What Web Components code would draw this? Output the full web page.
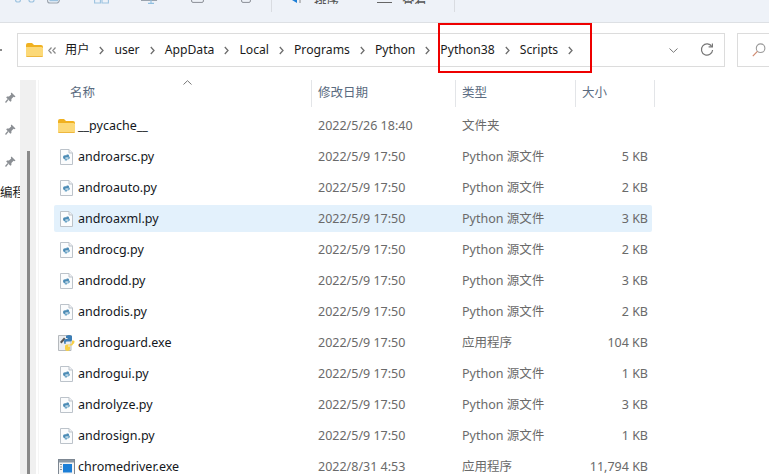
<!DOCTYPE html>
<html lang="zh">
    <head>
        <meta charset="utf-8"/>
        <title>Scripts</title>
        <style>
            html, body { margin: 0; background: #fff; }
        </style>
    </head>
    <body>
        <explorer-window>
            <tool-bar slot="toolbar"></tool-bar>
            <address-bar slot="address" path="用户 user AppData Local Programs Python Python38 Scripts"></address-bar>
            <nav-pane slot="nav"></nav-pane>
            <file-list slot="list">
                <file-row kind="folder" date="2022/5/26 18:40" type="文件夹">__pycache__</file-row>
                <file-row kind="py" date="2022/5/9 17:50" type="Python 源文件" size="5 KB">androarsc.py</file-row>
                <file-row kind="py" date="2022/5/9 17:50" type="Python 源文件" size="2 KB">androauto.py</file-row>
                <file-row kind="py" date="2022/5/9 17:50" type="Python 源文件" size="3 KB" selected>androaxml.py</file-row>
                <file-row kind="py" date="2022/5/9 17:50" type="Python 源文件" size="2 KB">androcg.py</file-row>
                <file-row kind="py" date="2022/5/9 17:50" type="Python 源文件" size="3 KB">androdd.py</file-row>
                <file-row kind="py" date="2022/5/9 17:50" type="Python 源文件" size="2 KB">androdis.py</file-row>
                <file-row kind="pyexe" date="2022/5/9 17:50" type="应用程序" size="104 KB">androguard.exe</file-row>
                <file-row kind="py" date="2022/5/9 17:50" type="Python 源文件" size="1 KB">androgui.py</file-row>
                <file-row kind="py" date="2022/5/9 17:50" type="Python 源文件" size="3 KB">androlyze.py</file-row>
                <file-row kind="py" date="2022/5/9 17:50" type="Python 源文件" size="1 KB">androsign.py</file-row>
                <file-row kind="exe" date="2022/8/31 4:53" type="应用程序" size="11,794 KB">chromedriver.exe</file-row>
            </file-list>
        </explorer-window>

        <script>
            const FONT = `"Noto Sans", "Noto Sans CJK SC", sans-serif`;

            const FOLDER_ICON = `
                <svg width="17" height="14" viewBox="0 0 17 14">
                    <path d="M0 2 Q0 0 2 0 H6 L8 2 H15 Q17 2 17 4 V5 H0 Z" fill="#f0b120"/>
                    <path d="M0 4 H15.5 Q17 4 17 5.5 V12.5 Q17 14 15.5 14 H1.5 Q0 14 0 12.5 Z" fill="#fcd978"/>
                    <path d="M0 13 H17 V12.5 Q17 14 15.5 14 H1.5 Q0 14 0 12.5 Z" fill="#eeb73d"/>
                </svg>`;

            const ICONS = {
                folder: FOLDER_ICON,
                py: `
                    <svg width="17" height="18" viewBox="0 0 17 18">
                        <path d="M2.5 1.5 H11 L14.5 5 V16.5 H2.5 Z" fill="#fbfcfd" stroke="#bcc3ca"/>
                        <path d="M11 1.5 V5 H14.5" fill="#eef1f4" stroke="#bcc3ca"/>
                        <path d="M5 9 Q5 7.2 7 7.2 H8.6 V6.4 H9.8 Q11 6.4 11 7.6 V9.6 H7.4 V11 H6.2 Q5 11 5 9 Z" fill="#4b8bb5"/>
                        <path d="M12 9.6 Q12 11.4 10.2 11.4 H9 V12.6 H7.6 Q6.6 12.6 6.6 11.4 V10.4 H10.2 V8.4 H11 Q12 8.4 12 9.6 Z" fill="#6fa6c8"/>
                    </svg>`,
                pyexe: `
                    <svg width="18" height="18" viewBox="0 0 18 18">
                        <path d="M0.5 1.5 H13 V16.5 H0.5 Z" fill="#eceef0" stroke="#b5b9bd"/>
                        <path d="M2 8 L6 3.5 L7.5 5 L3.5 9.5 Z" fill="#555"/>
                        <path d="M6 7 Q6 5 8 5 H9.5 V4 H8 V2.5 Q8 1 11 1 Q14 1 14 2.5 V6 Q14 7.6 12 7.6 H9 Q7.6 7.6 7.6 9 V10 H6.6 Q6 10 6 7 Z" fill="#3b7db5"/>
                        <path d="M16.5 7 Q16.5 10 15 10 V10 Q15 11.5 13 11.5 H10 V12.6 H12 V14.5 Q12 17 9.5 17 Q7 17 7 14.5 V12 Q7 10.4 9 10.4 H12 Q14 10.4 14 8.6 V6.6 H15.5 Q16.5 6.6 16.5 7 Z" fill="#f6cf45"/>
                    </svg>`,
                exe: `
                    <svg width="17" height="16" viewBox="0 0 17 16">
                        <rect x="0.5" y="0.5" width="16" height="15" fill="#f3f4f5" stroke="#7d8792"/>
                        <rect x="1" y="1" width="15" height="2.5" fill="#8b98a5"/>
                        <rect x="5" y="5" width="9" height="8.5" fill="#1c7ed6"/>
                        <path d="M2 5.5 H4 M2 8 H4 M2 10.5 H4" stroke="#8a939c" stroke-width="1.2"/>
                    </svg>`
            };

            class FileIcon extends HTMLElement {
                constructor() {
                    super();
                    let shadowDom = this.attachShadow({mode: 'open'});
                    shadowDom.innerHTML = `
                        <style>
                            :host { display: flex; width: 20px; height: 18px; align-items: center; flex: none; }
                            svg { display: block; }
                        </style>
                        ${ICONS[this.getAttribute("kind")] || ""}
                    `;
                }
            }
            window.customElements.define("file-icon", FileIcon);

            class FileRow extends HTMLElement {
                constructor() {
                    super();
                    let shadowDom = this.attachShadow({mode: 'open'});
                    const date = this.getAttribute("date") || "";
                    const type = this.getAttribute("type") || "";
                    const size = this.getAttribute("size") || "";
                    const kind = this.getAttribute("kind");
                    shadowDom.innerHTML = `
                        <style>
                            :host {
                                display: grid;
                                grid-template-columns: 257px 144px 120px 77px;
                                align-items: center;
                                height: 27px;
                                margin-bottom: 4px;
                                border-radius: 2px;
                                color: #6a6a6a;
                            }
                            :host([selected]) { background: #e3f1fc; }
                            .name { display: flex; align-items: center; padding-left: 4px; color: #14171c; white-space: nowrap; }
                            .cell { padding-left: 7px; white-space: nowrap; }
                            .size { text-align: right; padding-right: 4px; }
                        </style>
                        <div class="name"><file-icon kind="${kind}"></file-icon><slot></slot></div>
                        <div class="cell">${date}</div>
                        <div class="cell">${type}</div>
                        <div class="size">${size}</div>
                    `;
                }
            }
            window.customElements.define("file-row", FileRow);

            class FileList extends HTMLElement {
                constructor() {
                    super();
                    let shadowDom = this.attachShadow({mode: 'open'});
                    shadowDom.innerHTML = `
                        <style>
                            :host { display: block; position: relative; width: 601px; margin-left: 15px; font: 12.5px/18px ${FONT}; }
                            .head {
                                display: grid;
                                grid-template-columns: 257px 144px 120px 80px;
                                height: 27px;
                                margin-bottom: 5px;
                                color: #5a6b80;
                            }
                            .head div { line-height: 26px; padding-left: 6px; border-left: 1px solid #e3e5e8; }
                            .head div:first-child { padding-left: 16px; border-left: 0; }
                            .head div:last-child { border-right: 1px solid #e3e5e8; }
                            .sort { position: absolute; left: 129px; top: 0; display: block; }
                            .rows { width: 598px; }
                        </style>
                        <div class="head">
                            <div>名称</div><div>修改日期</div><div>类型</div><div>大小</div>
                        </div>
                        <svg class="sort" width="9" height="5" viewBox="0 0 9 5">
                            <path d="M0.5 4.5 L4.5 0.7 L8.5 4.5" fill="none" stroke="#777" stroke-width="1"/>
                        </svg>
                        <div class="rows"><slot></slot></div>
                    `;
                }
            }
            window.customElements.define("file-list", FileList);

            class NavPane extends HTMLElement {
                constructor() {
                    super();
                    let shadowDom = this.attachShadow({mode: 'open'});
                    const pin = `
                        <svg class="pin" width="11" height="11" viewBox="0 0 11 11">
                            <path d="M6.5 0.5 L10.5 4.5 L9.5 5.2 L8.6 4.8 L6.4 7 L6.4 9 L5.4 9.8 L1.2 5.6 L2 4.6 L4 4.6 L6.2 2.4 L5.8 1.5 Z" fill="#8b8f94"/>
                            <path d="M3 7.5 L0.5 10.5" stroke="#8b8f94" stroke-width="1.2"/>
                        </svg>`;
                    shadowDom.innerHTML = `
                        <style>
                            :host { display: flex; width: 39px; flex: none; height: 395px; border-right: 1px solid #f5f5f5; box-sizing: border-box; }
                            .items { width: 20px; overflow: hidden; padding-top: 1px; box-sizing: border-box; }
                            .item { height: 32px; display: flex; align-items: center; padding-left: 5px; }
                            .label { font: 12.5px/32px ${FONT}; color: #222; white-space: nowrap; margin-left: 0; padding-left: 0; }
                            .track { width: 16px; background: #f0f0f0; display: flex; justify-content: center; padding-top: 71px; box-sizing: border-box; }
                            .thumb { width: 3px; height: 100%; background: #8a8a8a; }
                        </style>
                        <div class="items">
                            <div class="item">${pin}</div>
                            <div class="item">${pin}</div>
                            <div class="item">${pin}</div>
                            <div class="label">编程</div>
                        </div>
                        <div class="track"><div class="thumb"></div></div>
                    `;
                }
            }
            window.customElements.define("nav-pane", NavPane);

            class AddressBar extends HTMLElement {
                constructor() {
                    super();
                    let shadowDom = this.attachShadow({mode: 'open'});
                    const chevron = `
                        <svg class="sep" width="25" height="9" viewBox="0 0 25 9">
                            <path d="M10.8 1 L14 4.5 L10.8 8" fill="none" stroke="#6e6e6e" stroke-width="1.3"/>
                        </svg>`;
                    const crumbs = this.getAttribute("path").split(" ")
                        .map(part => `<span>${part}</span>${chevron}`).join("");
                    shadowDom.innerHTML = `
                        <style>
                            :host { display: flex; height: 34px; padding-left: 17px; gap: 12px; font: 12.2px/18px ${FONT}; color: #1a1a1a; }
                            .back { position: absolute; left: 0; top: 49px; width: 2px; height: 2px; background: #8a8a8a; }
                            .box {
                                flex: none;
                                width: 708px;
                                box-sizing: border-box;
                                display: flex;
                                align-items: center;
                                padding-left: 8px;
                                border: 1px solid #dcdcdc;
                                border-width: 1.5px;
                            }
                            .search {
                                flex: 1;
                                display: flex;
                                align-items: center;
                                padding-left: 14px;
                                border: 1px solid #dcdcdc;
                                border-right: 0;
                                border-width: 1.5px;
                            }
                            .more { display: block; margin: 0 6px 0 5px; flex: none; }
                            .crumbs { display: flex; align-items: center; white-space: nowrap; flex: 1; }
                            svg { display: block; flex: none; }
                            .dd { margin-right: 22px; }
                            .refresh { margin-right: 10px; }
                        </style>
                        <i class="back"></i>
                        <div class="box">
                            ${FOLDER_ICON}
                            <svg class="more" width="8" height="7" viewBox="0 0 8 7">
                                <path d="M3.5 0.5 L0.8 3.5 L3.5 6.5 M7.5 0.5 L4.8 3.5 L7.5 6.5" fill="none" stroke="#8a8a8a" stroke-width="1.2"/>
                            </svg>
                            <div class="crumbs" style="margin-left:3px">${crumbs}</div>
                            <svg class="dd" width="9" height="5" viewBox="0 0 9 5">
                                <path d="M0.5 0.5 L4.5 4.3 L8.5 0.5" fill="none" stroke="#777" stroke-width="1"/>
                            </svg>
                            <svg class="refresh" width="14" height="14" viewBox="0 0 14 14">
                                <path d="M11.8 3.6 A5.6 5.6 0 1 0 12.6 7" fill="none" stroke="#777" stroke-width="1.2"/>
                                <path d="M8.6 3.8 H12.4 V0.4" fill="none" stroke="#777" stroke-width="1.2"/>
                            </svg>
                        </div>
                        <div class="search">
                            <svg width="14" height="14" viewBox="0 0 14 14">
                                <circle cx="8.6" cy="5.2" r="4.3" fill="none" stroke="#9b9b9b" stroke-width="1.1"/>
                                <path d="M5.4 8.4 L0.8 13.2" stroke="#d08a70" stroke-width="1.2"/>
                            </svg>
                        </div>
                    `;
                }
            }
            window.customElements.define("address-bar", AddressBar);

            class ToolBar extends HTMLElement {
                constructor() {
                    super();
                    let shadowDom = this.attachShadow({mode: 'open'});
                    shadowDom.innerHTML = `
                        <style>
                            :host {
                                display: block;
                                height: 23px;
                                box-sizing: border-box;
                                background: #eef2f8;
                                border-bottom: 1px solid #dde0e4;
                                overflow: hidden;
                                font: 12.5px/18px ${FONT};
                                color: #333;
                            }
                            .strip { display: flex; height: 12px; align-items: flex-end; }
                            .strip > * { flex: none; }
                            svg { display: block; }
                            .sep { width: 1px; height: 12px; background: #d9dce1; }
                            .label { margin-bottom: -1px; line-height: 18px; }
                        </style>
                        <div class="strip" style="height:12px">
                            <svg style="margin-left:15px;margin-bottom:9px" width="20" height="4" viewBox="0 0 20 4">
                                <path d="M0.6 0 V1.2 Q0.6 3 3 3 Q5.4 3 5.4 1.2 V0 M14 0 V1.2 Q14 3 16.5 3 Q19 3 19 1.2 V0" fill="none" stroke="#9cc3e0" stroke-width="1.2"/>
                            </svg>
                            <svg style="margin-left:12px;margin-bottom:8px" width="13" height="5" viewBox="0 0 13 5">
                                <path d="M0.6 0 V2 Q0.6 4 3 4 H10 Q12 4 12.4 1" fill="none" stroke="#9aa3ad" stroke-width="1.1"/>
                                <path d="M3 0 V1.6 H11" fill="none" stroke="#9cc3e0" stroke-width="1.1"/>
                            </svg>
                            <svg style="margin-left:34px;margin-bottom:8px" width="15" height="5" viewBox="0 0 15 5">
                                <path d="M0.6 0 V4 H6.4 V0" fill="none" stroke="#9cc3e0" stroke-width="1.1"/>
                                <path d="M8 0 V4 H14.4 V0" fill="none" stroke="#9cc3e0" stroke-width="1.1"/>
                            </svg>
                            <svg style="margin-left:32px;margin-bottom:8px" width="20" height="5" viewBox="0 0 20 5">
                                <path d="M0.5 0 V1.5 H15.5 V0" fill="none" stroke="#9aa3ad" stroke-width="1.1"/>
                                <path d="M10 0 V4 M7 4.4 H13" stroke="#8fbfe0" stroke-width="1.1"/>
                            </svg>
                            <svg style="margin-left:30px;margin-bottom:9px" width="13" height="3" viewBox="0 0 13 3">
                                <path d="M0.6 0 V1 Q0.6 2.4 2 2.4 H11 Q12.4 2.4 12.4 1 V0" fill="none" stroke="#8a8f96" stroke-width="1"/>
                            </svg>
                            <svg style="margin-left:37px;margin-bottom:9px" width="10" height="3" viewBox="0 0 10 3">
                                <path d="M0.6 0 V1 Q0.6 2.4 2 2.4 H8 Q9.4 2.4 9.4 1 V0" fill="none" stroke="#8a8f96" stroke-width="1"/>
                            </svg>
                        </div>
                        <div class="strip" style="margin-top:-12px;padding-left:271px">
                            <div class="sep"></div>
                            <svg style="margin-left:20px;margin-bottom:9px" width="10" height="3" viewBox="0 0 10 3">
                                <path d="M0 0 L5 3 L5 0 Z" fill="#1c7ed6"/>
                                <path d="M8 0 V3" stroke="#888" stroke-width="1"/>
                            </svg>
                            <span class="label" style="margin-left:12px;margin-bottom:8px;height:4px;overflow:hidden;display:flex;align-items:flex-end;line-height:4px;color:#555;font-size:12.5px;margin-top:-2px">排序</span>
                            <div style="margin-left:38px;margin-bottom:9px;width:15px;height:1px;background:#666"></div>
                            <span class="label" style="margin-left:10px;margin-bottom:8px;height:4px;overflow:hidden;display:flex;align-items:flex-end;line-height:4px;color:#555">查看</span>
                            <div class="sep" style="margin-left:27px"></div>
                        </div>
                    `;
                }
            }
            window.customElements.define("tool-bar", ToolBar);

            class ExplorerWindow extends HTMLElement {
                constructor() {
                    super();
                    let shadowDom = this.attachShadow({mode: 'open'});
                    shadowDom.innerHTML = `
                        <style>
                            :host { display: block; position: relative; width: 769px; height: 474px; overflow: hidden; background: #fff; }
                            .addr { padding: 10px 0 13px; }
                            .main { display: flex; }
                            .mark { position: absolute; left: 438px; top: 23px; width: 154px; height: 50px; box-sizing: border-box; border: 2px solid #ee0000; }
                        </style>
                        <slot name="toolbar"></slot>
                        <div class="addr"><slot name="address"></slot></div>
                        <div class="main">
                            <slot name="nav"></slot>
                            <slot name="list"></slot>
                        </div>
                        <div class="mark"></div>
                    `;
                }
            }
            window.customElements.define("explorer-window", ExplorerWindow);
        </script>
    </body>
</html>
